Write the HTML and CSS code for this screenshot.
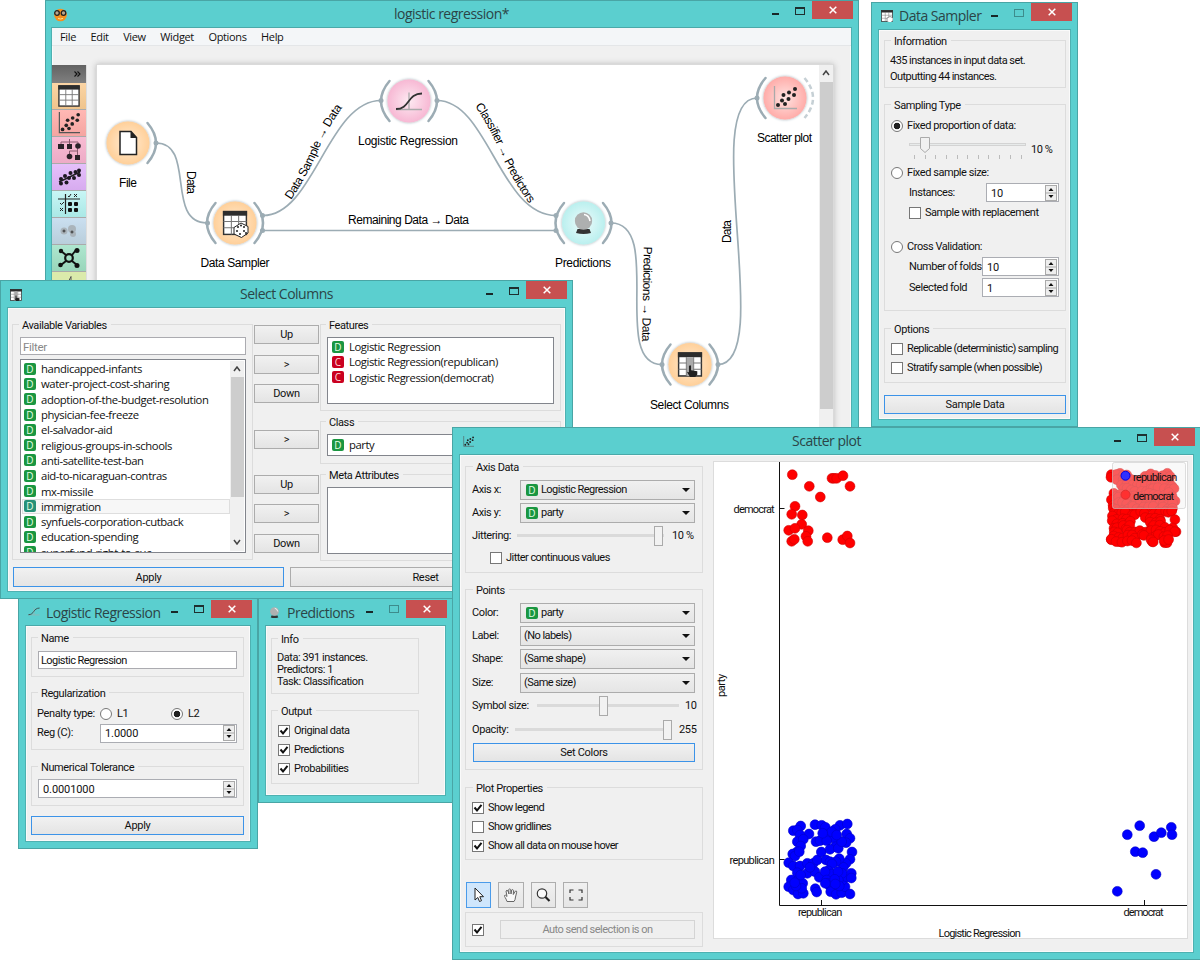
FILE: index.html
```html
<!DOCTYPE html>
<html lang="en">
<head>
<meta charset="utf-8">
<title>logistic regression</title>
<link rel="stylesheet" href="styles.css">
</head>
<body>
<svg class="defs" width="0" height="0" aria-hidden="true">
  <defs>
    <symbol id="i-table" viewBox="0 0 24 24"><rect x="1" y="1" width="22" height="22" fill="#fff" stroke="#333" stroke-width="1.5"/><path d="M1 10.5h22M1 16.5h22M8.5 5v18M15.500 5v18" stroke="#777" stroke-width="1"/><rect x="0.300" y="0.300" width="23.400" height="4.700" fill="#2d2d2d"/></symbol>
    <symbol id="i-scatter" viewBox="0 0 24 24"><path d="M1.500 0v22.500H24" fill="none" stroke="var(--axis,#555)" stroke-width="1.300"/><g fill="#222"><circle cx="5" cy="19" r="2"/><circle cx="9" cy="14.500" r="2"/><circle cx="12" cy="18" r="2"/><circle cx="10.500" cy="9" r="2"/><circle cx="15.500" cy="13" r="2"/><circle cx="16" cy="6.500" r="2"/><circle cx="21" cy="9" r="2"/><circle cx="22" cy="3" r="2"/></g></symbol>
    <symbol id="i-sigmoid" viewBox="0 0 28 20"><path d="M14 1v17M1 18h26" stroke="#aaa" stroke-width="1.300"/><path d="M1 17.500C15 17.500 12 2 27 2" fill="none" stroke="#333" stroke-width="1.800"/></symbol>
    <symbol id="i-ball" viewBox="0 0 18 22"><path d="M3 17h12l1.500 4q-7.500 2-15 0z" fill="#333"/><circle cx="9" cy="9" r="8.700" fill="#aeb0b0"/><path d="M9.500 2.500q5 .5 6 6.500" fill="none" stroke="#fff" stroke-width="1.600"/></symbol>
    <symbol id="i-dice" viewBox="0 0 24 24"><use href="#i-table"/><path d="M12 16l6-3 6 2.500v6L18 26l-6-3z" fill="#fff" stroke="#333"/></symbol>
    <symbol id="i-columns" viewBox="0 0 24 24"><use href="#i-table"/><rect x="9" y="5" width="6" height="18" fill="#aaa"/><path d="M11 13.500q1.500-1.500 2 0v4l6 1v3l-2 2.500h-5l-3-5 2 .5z" fill="#222"/></symbol>
  </defs>
</svg>
<div class="desktop">

<section class="window w-main">
  <header class="titlebar wide">
    <svg class="ticon" width="15" height="15" viewBox="0 0 15 15"><circle cx="7.500" cy="8" r="6.300" fill="#f49020"/><circle cx="4" cy="6" r="2.300" fill="#b9a58b" stroke="#222" stroke-width="1.300"/><circle cx="10.500" cy="6" r="2.300" fill="#b9a58b" stroke="#222" stroke-width="1.300"/><path d="M5 11.300q2.500 1.500 5 0" stroke="#ffe08a" fill="none"/></svg>
    <h1>logistic regression*</h1>
    <div class="ctl"><i class="min"></i><i class="max"></i><b class="close"><svg width="8" height="8" viewBox="0 0 8 8"><path d="M.7.7l6.600 6.600M7.300.7L.7 7.300"/></svg></b></div>
  </header>
  <div class="client">
    <nav class="menu"><span>File</span><span>Edit</span><span>View</span><span>Widget</span><span>Options</span><span>Help</span></nav>
    <div class="work">
      <aside class="dock">
        <div class="dhead"><svg width="7" height="6" viewBox="0 0 7 6"><path d="M.5.5L3 3 .5 5.500M3.500.5L6 3 3.500 5.500" fill="none" stroke="#111" stroke-width="1.100"/></svg></div>
        <div class="cat c1"><svg width="22" height="22"><use href="#i-table"/></svg></div>
        <div class="cat c2"><svg width="22" height="22"><use href="#i-scatter"/></svg></div>
        <div class="cat c3"><svg width="23" height="22" viewBox="0 0 23 22"><path d="M3 6V3h17v3M11.500 0v6M19.500 8v4h-8v4M19.500 12v4" fill="none" stroke="#8a5b6e"/><g fill="#2a2228"><rect x="0" y="5" width="6" height="5"/><rect x="9" y="5" width="5" height="5"/><circle cx="20" cy="7" r="2.800"/><circle cx="11.500" cy="17.500" r="2.800"/><rect x="17" y="16" width="5" height="5"/></g></svg></div>
        <div class="cat c4"><svg width="23" height="18" viewBox="0 0 23 18"><path d="M1 14L22 4" stroke="#222" stroke-width="1.500"/><g fill="#1d1822"><circle cx="3" cy="11" r="2"/><circle cx="3" cy="15.500" r="2"/><circle cx="7" cy="8" r="2"/><circle cx="8.500" cy="14.500" r="2"/><circle cx="11" cy="10" r="2"/><circle cx="12.500" cy="5" r="2"/><circle cx="16" cy="10" r="2"/><circle cx="17.500" cy="4" r="2"/><circle cx="21" cy="2.500" r="2"/><circle cx="21" cy="7" r="2"/></g></svg></div>
        <div class="cat c5"><svg width="22" height="20" viewBox="0 0 22 20"><path d="M0 5h22M7.500 0v20" stroke="#222" stroke-width="1.200"/><path d="M10 2l1 1 2-3M16 0l3 3M19 0l-3 3M2 9l1.500 1.500L6 8M2 14l3 3M5 14l-3 3" fill="none" stroke="#222"/><g fill="#111"><rect x="10" y="8" width="4" height="4" rx="1"/><rect x="16" y="8" width="4" height="4" rx="1"/><rect x="10" y="14" width="4" height="4" rx="1"/><rect x="16" y="14" width="4" height="4" rx="1"/></g></svg></div>
        <div class="cat c6"><svg width="18" height="14" viewBox="0 0 18 14"><g fill="#aab4bb"><circle cx="4" cy="7" r="3.500"/><circle cx="12" cy="5" r="4"/><circle cx="13" cy="10" r="3"/></g><path d="M4 5.500v3M2.500 7h3M12 6.500v3M10.500 8h3" stroke="#333"/></svg></div>
        <div class="cat c7"><svg width="22" height="20" viewBox="0 0 22 20"><path d="M3 3l5 4M18 2l-4 5M3 17l5-4M19 17l-5-4" stroke="#111" stroke-width="2"/><circle cx="11" cy="10" r="3.800" fill="none" stroke="#111" stroke-width="2.200"/><g fill="#111"><circle cx="3" cy="3" r="2.200"/><circle cx="19" cy="2.500" r="2.500"/><circle cx="2.500" cy="17" r="2.300"/><circle cx="19" cy="17.500" r="2.500"/></g></svg></div>
        <div class="cat c8"><svg width="12" height="10" viewBox="0 0 12 10"><path d="M4 8.500h2l2-4V10" fill="none" stroke="#555"/></svg></div>
      </aside>
      <div class="canvas">
        <svg class="flow" width="722" height="400" viewBox="97 65 722 400">
          <defs>
            <radialGradient id="go"><stop offset="0" stop-color="#ffecd4"/><stop offset="1" stop-color="#ffcf98"/></radialGradient>
            <radialGradient id="gp"><stop offset="0" stop-color="#fdeaf2"/><stop offset="1" stop-color="#f7b7d3"/></radialGradient>
            <radialGradient id="gc"><stop offset="0" stop-color="#eefcfc"/><stop offset="1" stop-color="#b9efee"/></radialGradient>
            <radialGradient id="gr"><stop offset="0" stop-color="#ffe3e1"/><stop offset="1" stop-color="#ffaba8"/></radialGradient>
            <path id="arc" d="M19.500-20Q36.500 0 19.500 20"/>
            <path id="p1" d="M291 200Q306 178 318 151Q327 128 345 104"/>
            <path id="p2" d="M475 106Q490 128 500 152Q512 180 531 206"/>
          </defs>
          <g class="link">
            <path d="M156 143C196 143 165 223 207 223"/>
            <path d="M263 215.500C314 215.500 328 100.500 381 100.500"/>
            <path d="M263 230.500H556"/>
            <path d="M437 100.500C488 100.500 500 215.500 556 215.500"/>
            <path d="M611 223C664 223 610 364.500 662 364.500"/>
            <path d="M718 364.500C776 364.500 698 98 757 98"/>
          </g>
          <g class="ports"><circle cx="156" cy="143" r="2.500"/><circle cx="207.500" cy="223" r="2.500"/><circle cx="262.500" cy="215.500" r="2.500"/><circle cx="262.500" cy="230.500" r="2.500"/><circle cx="381" cy="100.500" r="2.500"/><circle cx="437" cy="100.500" r="2.500"/><circle cx="556" cy="215.500" r="2.500"/><circle cx="556" cy="230.500" r="2.500"/><circle cx="611" cy="223" r="2.500"/><circle cx="662" cy="364.500" r="2.500"/><circle cx="718" cy="364.500" r="2.500"/><circle cx="757" cy="98" r="2.500"/></g>
          <g transform="translate(128 143)"><circle class="disc" r="22" fill="url(#go)"/><use class="arc" href="#arc"/><path d="M-8-11.500H3L8.500-5.500V11.500H-8z" fill="#fff" stroke="#222" stroke-width="1.500"/><path d="M2.500-12l6.500 7h-6.500z" fill="#222"/></g>
          <g transform="translate(235 223)"><circle class="disc" r="22" fill="url(#go)"/><use class="arc" href="#arc"/><use class="arc" href="#arc" transform="scale(-1 1)"/><use href="#i-table" x="-12.500" y="-12.500" width="25" height="25"/><path d="M-1 4.500L6 0l7 3.500V10L6.500 14.500-1 11z" fill="#fff" stroke="#222"/><g fill="#222"><circle cx="3" cy="4" r="1"/><circle cx="6" cy="2.500" r="1"/><circle cx="9" cy="4" r="1"/><circle cx="2" cy="8" r="1"/><circle cx="5" cy="11" r="1"/><circle cx="9" cy="8" r="1"/><circle cx="11" cy="10" r="1"/></g></g>
          <g transform="translate(409 101)"><circle class="disc" r="22" fill="url(#gp)"/><use class="arc" href="#arc"/><use class="arc" href="#arc" transform="scale(-1 1)"/><use href="#i-sigmoid" x="-14" y="-9.500" width="28" height="20"/></g>
          <g transform="translate(583.500 223)"><circle class="disc" r="22" fill="url(#gc)"/><use class="arc" href="#arc"/><use class="arc" href="#arc" transform="scale(-1 1)"/><use href="#i-ball" x="-9" y="-11" width="18" height="22"/></g>
          <g transform="translate(785 98)"><circle class="disc" r="22" fill="url(#gr)"/><use class="arc dash" href="#arc"/><use class="arc" href="#arc" transform="scale(-1 1)"/><use class="pale" href="#i-scatter" x="-12.500" y="-12" width="25" height="24"/></g>
          <g transform="translate(690 364.500)"><circle class="disc" r="22" fill="url(#go)"/><use class="arc" href="#arc"/><use class="arc" href="#arc" transform="scale(-1 1)"/><use href="#i-columns" x="-12.500" y="-12.500" width="25" height="25"/></g>
          <g class="nlabel">
            <text x="128" y="187" textLength="18">File</text><text x="235" y="267" textLength="69">Data Sampler</text><text x="408" y="145" textLength="100">Logistic Regression</text><text x="583" y="267" textLength="56">Predictions</text><text x="784.500" y="142" textLength="55">Scatter plot</text><text x="689.500" y="408.500" textLength="79">Select Columns</text>
            <text x="408.500" y="224" textLength="121">Remaining Data → Data</text>
            <text transform="translate(187 182.500) rotate(90)" textLength="23">Data</text>
            <text transform="translate(643 294) rotate(91)" textLength="95">Predictions → Data</text>
            <text transform="translate(731 231.500) rotate(-90)" textLength="23">Data</text>
          </g>
          <g class="clabel"><text textLength="106"><textPath href="#p1">Data Sample → Data</textPath></text><text textLength="112"><textPath href="#p2">Classifier → Predictors</textPath></text></g>
        </svg>
        <div class="vscroll"><svg width="8" height="6" viewBox="0 0 8 6"><path d="M1 5l3-4 3 4" /></svg><i></i></div>
      </div>
    </div>
  </div>
</section>

<section class="window w-sampler">
  <header class="titlebar">
    <svg class="ticon" width="12" height="12"><use href="#i-dice"/></svg>
    <h1>Data Sampler</h1>
    <div class="ctl"><i class="min"></i><i class="max off"></i><b class="close"><svg width="8" height="8" viewBox="0 0 8 8"><path d="M.7.7l6.600 6.600M7.300.7L.7 7.300"/></svg></b></div>
  </header>
  <div class="client">
    <div class="group g-info"><span class="cap">Information</span><p>435 instances in input data set.</p><p>Outputting 44 instances.</p></div>
    <div class="group g-type"><span class="cap">Sampling Type</span>
      <label class="row"><i class="radio on"></i>Fixed proportion of data:</label>
      <div class="prop"><div class="ticked"><svg width="118" height="23" viewBox="0 0 118 23"><rect x=".5" y="6.500" width="116" height="2" fill="#e7eaea" stroke="#d3d3d3"/><path d="M5.500 18v4M16.500 18v4M26.500 18v4M37.500 18v4M48.500 18v4M58.500 18v4M69.500 18v4M79.500 18v4M90.500 18v4M101.500 18v4M112.500 18v4" stroke="#bbb"/><path d="M11.500.5h9v11l-4.500 4-4.500-4z" fill="#f1f1f1" stroke="#aaa"/></svg></div><span>10 %</span></div>
      <label class="row r2"><i class="radio"></i>Fixed sample size:</label>
      <div class="row ind r3"><span>Instances:</span><div class="spin s72">10<i></i></div></div>
      <label class="row ind r4"><i class="check"></i>Sample with replacement</label>
      <label class="row r5"><i class="radio"></i>Cross Validation:</label>
      <div class="row ind r6"><span>Number of folds</span><div class="spin s77">10<i></i></div></div>
      <div class="row ind r7"><span>Selected fold</span><div class="spin s77">1<i></i></div></div>
    </div>
    <div class="group g-opt"><span class="cap">Options</span>
      <label class="row"><i class="check"></i>Replicable (deterministic) sampling</label>
      <label class="row"><i class="check"></i>Stratify sample (when possible)</label>
    </div>
    <div class="btn def">Sample Data</div>
  </div>
</section>

<section class="window w-log">
  <header class="titlebar">
    <svg class="ticon" width="12" height="9"><use href="#i-sigmoid"/></svg>
    <h1>Logistic Regression</h1>
    <div class="ctl"><i class="min"></i><i class="max"></i><b class="close"><svg width="8" height="8" viewBox="0 0 8 8"><path d="M.7.7l6.600 6.600M7.300.7L.7 7.300"/></svg></b></div>
  </header>
  <div class="client">
    <div class="group g-name"><span class="cap">Name</span><div class="input">Logistic Regression</div></div>
    <div class="group g-reg"><span class="cap">Regularization</span>
      <div class="row pen"><span>Penalty type:</span><i class="radio"></i><span class="l1">L1</span><i class="radio on"></i><span>L2</span></div>
      <div class="row regc"><span>Reg (C):</span><div class="spin">1.0000<i></i></div></div>
    </div>
    <div class="group g-tol"><span class="cap">Numerical Tolerance</span><div class="spin">0.0001000<i></i></div></div>
    <div class="btn def">Apply</div>
  </div>
</section>

<section class="window w-pred">
  <header class="titlebar">
    <svg class="ticon" width="9" height="11"><use href="#i-ball"/></svg>
    <h1>Predictions</h1>
    <div class="ctl"><i class="min"></i><i class="max off"></i><b class="close"><svg width="8" height="8" viewBox="0 0 8 8"><path d="M.7.7l6.600 6.600M7.300.7L.7 7.300"/></svg></b></div>
  </header>
  <div class="client">
    <div class="group g-pinfo"><span class="cap">Info</span><p>Data: 391 instances.</p><p>Predictors: 1</p><p>Task: Classification</p></div>
    <div class="group g-out"><span class="cap">Output</span>
      <label class="row"><i class="check on"></i>Original data</label><label class="row"><i class="check on"></i>Predictions</label><label class="row"><i class="check on"></i>Probabilities</label>
    </div>
  </div>
</section>

<section class="window w-select">
  <header class="titlebar wide">
    <svg class="ticon" width="12" height="12"><use href="#i-columns"/></svg>
    <h1>Select Columns</h1>
    <div class="ctl"><i class="min"></i><i class="max"></i><b class="close"><svg width="8" height="8" viewBox="0 0 8 8"><path d="M.7.7l6.600 6.600M7.300.7L.7 7.300"/></svg></b></div>
  </header>
  <div class="client">
    <div class="cols">
      <div class="group g-avail"><span class="cap">Available Variables</span>
        <div class="input filter">Filter</div>
        <div class="list vars"><ul><li><b class="v">D</b>handicapped-infants</li><li><b class="v">D</b>water-project-cost-sharing</li><li><b class="v">D</b>adoption-of-the-budget-resolution</li><li><b class="v">D</b>physician-fee-freeze</li><li><b class="v">D</b>el-salvador-aid</li><li><b class="v">D</b>religious-groups-in-schools</li><li><b class="v">D</b>anti-satellite-test-ban</li><li><b class="v">D</b>aid-to-nicaraguan-contras</li><li><b class="v">D</b>mx-missile</li><li class="hot"><b class="v">D</b>immigration</li><li><b class="v">D</b>synfuels-corporation-cutback</li><li><b class="v">D</b>education-spending</li><li><b class="v">D</b>superfund-right-to-sue</li></ul>
          <div class="vscroll"><svg width="8" height="6" viewBox="0 0 8 6"><path d="M1 5l3-4 3 4"/></svg><i></i><svg class="dn" width="8" height="6" viewBox="0 0 8 6"><path d="M1 1l3 4 3-4"/></svg></div></div>
      </div>
      <div class="moves"><div class="btn">Up</div><div class="btn">&gt;</div><div class="btn">Down</div><div class="btn gapa">&gt;</div><div class="btn gapb">Up</div><div class="btn">&gt;</div><div class="btn">Down</div></div>
      <div class="chosen">
        <div class="group g-feat"><span class="cap">Features</span><div class="list"><ul><li><b class="v">D</b>Logistic Regression</li><li><b class="v c">C</b>Logistic Regression(republican)</li><li><b class="v c">C</b>Logistic Regression(democrat)</li></ul></div></div>
        <div class="group g-class"><span class="cap">Class</span><div class="list"><ul><li><b class="v">D</b>party</li></ul></div></div>
        <div class="group g-meta"><span class="cap">Meta Attributes</span><div class="list"></div></div>
      </div>
    </div>
    <div class="foot"><div class="btn def">Apply</div><div class="btn">Reset</div></div>
  </div>
</section>

<section class="window w-plot">
  <header class="titlebar wide">
    <svg class="ticon" width="11" height="11"><use href="#i-scatter"/></svg>
    <h1>Scatter plot</h1>
    <div class="ctl"><i class="min"></i><i class="max"></i><b class="close"><svg width="8" height="8" viewBox="0 0 8 8"><path d="M.7.7l6.600 6.600M7.300.7L.7 7.300"/></svg></b></div>
  </header>
  <div class="client">
    <div class="side">
      <div class="group g-axis"><span class="cap">Axis Data</span>
        <div class="field"><span>Axis x:</span><div class="combo"><b class="v">D</b>Logistic Regression</div></div>
        <div class="field"><span>Axis y:</span><div class="combo"><b class="v">D</b>party</div></div>
        <div class="field slide"><span>Jittering:</span><div class="slider jit"><i></i></div><em>10 %</em></div>
        <label class="row jc"><i class="check"></i>Jitter continuous values</label>
      </div>
      <div class="group g-points"><span class="cap">Points</span>
        <div class="field"><span>Color:</span><div class="combo"><b class="v">D</b>party</div></div>
        <div class="field"><span>Label:</span><div class="combo">(No labels)</div></div>
        <div class="field"><span>Shape:</span><div class="combo">(Same shape)</div></div>
        <div class="field"><span>Size:</span><div class="combo">(Same size)</div></div>
        <div class="field slide"><span>Symbol size:</span><div class="slider sym"><i></i></div><em>10</em></div>
        <div class="field slide"><span>Opacity:</span><div class="slider opa"><i></i></div><em>255</em></div>
        <div class="btn def">Set Colors</div>
      </div>
      <div class="group g-props"><span class="cap">Plot Properties</span>
        <label class="row"><i class="check on"></i>Show legend</label><label class="row"><i class="check"></i>Show gridlines</label><label class="row"><i class="check on"></i>Show all data on mouse hover</label>
      </div>
      <div class="tools">
        <div class="tool sel"><svg width="12" height="16" viewBox="0 0 12 16"><path d="M2 1v12l2.800-2.500L6.500 14.500l2-.8-1.700-4H10.500z" fill="#fff" stroke="#222"/></svg></div>
        <div class="tool"><svg width="16" height="15" viewBox="0 0 16 15"><path d="M4 13.500C3 10 1 8.500 1.500 7.500q1-1 2.500 1L3 3q1-1.500 2 0l1 3-.3-4.500q1.200-1.200 2 0L8 6l.7-4q1.300-1 1.800.3L10.300 6.500 12.500 3q1.500-.3 1.200 1.200L12.500 9q-.2 3-1.500 4.500z" fill="#f8f8f8" stroke="#666"/></svg></div>
        <div class="tool"><svg width="16" height="16" viewBox="0 0 16 16"><circle cx="7" cy="6.500" r="4.700" fill="#fafafa" stroke="#333" stroke-width="1.200"/><path d="M10.500 10l4 4" stroke="#222" stroke-width="2.200"/></svg></div>
        <div class="tool"><svg width="14" height="12" viewBox="0 0 14 12"><path d="M1 4V1h3.500M9.500 1H13v3M13 8v3H9.500M4.500 11H1V8" fill="none" stroke="#333" stroke-width="1.200"/></svg></div>
      </div>
      <div class="group g-send"><i class="check on"></i><div class="btn dis">Auto send selection is on</div></div>
    </div>
    <div class="plot">
      <svg width="473" height="476" viewBox="714 462 473 476">
        <g id="dots"></g>
        <path d="M779.500 462v443.500H1187M779.500 508.500h5M779.500 859.500h5M821.500 905v-5M1144.500 905v-5" fill="none" stroke="#111"/>
        <rect x="1112.500" y="462.500" width="73" height="46" rx="2" fill="#f0f0f0" fill-opacity=".38" stroke="#c8c8c8" stroke-opacity=".6"/>
        <circle cx="1125.500" cy="475.700" r="4.500" fill="#2f2fff" stroke="#0000e0"/><circle cx="1125.500" cy="494.700" r="4.500" fill="#ff3030" stroke="#e03030"/>
        <g class="ptext"><text x="1133" y="480.500" textLength="44">republican</text><text x="1133" y="499.500" textLength="41">democrat</text><text x="733.500" y="512.500" textLength="41">democrat</text><text x="729.500" y="864" textLength="45">republican</text><text x="798" y="916" textLength="44">republican</text><text x="1123.500" y="916" textLength="40">democrat</text><text x="938.500" y="937" textLength="82">Logistic Regression</text><text transform="translate(724.500 697) rotate(-90)" textLength="23">party</text></g>
      </svg>
    </div>
  </div>
</section>
</div>
<script src="plot.js"></script>
</body>
</html>
```

FILE: styles.css
```css
*{box-sizing:border-box}
body{margin:0;background:#fff;font:11px Roboto,"Noto Sans",sans-serif;letter-spacing:-.55px;color:#111;line-height:14px}
.defs{display:block;height:0}
.desktop{position:relative;width:1200px;height:960px;overflow:hidden}
p,h1,ul{margin:0;padding:0;list-style:none}
.window{position:absolute;display:flex;flex-direction:column;background:#5bcfcf;border:1px solid #49a5a5;padding:0 6px 6px}
.w-main{left:45px;top:0;width:814px;height:500px}
.window.w-main{padding-left:5px}
.w-sampler{left:871px;top:2px;width:207px;height:425px}
.w-log{left:18px;top:598px;width:240px;height:251px}
.w-pred{left:258px;top:598px;width:195px;height:205px}
.w-select{left:0;top:280px;width:573px;height:319px}
.w-plot{left:452px;top:427px;width:749px;height:533px}
.titlebar{height:26px;flex:none;display:flex;align-items:flex-start}
.titlebar.wide{display:grid;grid-template-columns:1fr auto 1fr}
.titlebar h1{font:14px/26px "Open Sans",sans-serif;letter-spacing:-.5px;color:#2b4547;white-space:nowrap}
.ticon{margin:7px 6px 0 3px}
.w-main .ticon{margin:6px 0 0 2px}
.w-plot .ticon{margin:8px 0 0 4px}
.w-select .ticon{margin-top:8px}
.w-log .ticon{margin:8px 6px 0 3px}
.w-pred .ticon{margin:8px 8px 0 5px}
.w-log h1,.w-pred h1{padding-top:1px}
.ctl{display:flex;align-items:flex-start;justify-content:flex-end;margin-left:auto;margin-right:-1px}
.min{width:7px;height:2px;background:#182828;margin:12px 16px 0 0}
.max{width:10px;height:8px;border:1px solid #1e3030;border-top-width:2px;margin:6px 7px 0 0}
.max.off{border-color:#3d8c8c;border-top-width:1px}
.close{width:41px;height:18px;background:#c75050;display:flex;align-items:center;justify-content:center}
.close path{stroke:#fff;stroke-width:1.500;fill:none}
.w-log .close,.w-pred .close{margin-top:1px}
.client{flex:1;min-height:0;background:#f0f0f0;border:1px solid #4eb1b1;border-top-color:#4aa9a9;box-shadow:inset 0 0 0 1px #fafafa}
.group{border:1px solid #dcdcdc;display:flex;flex-direction:column}
.cap{align-self:flex-start;height:14px;margin:-7px 0 0 6px;padding:1px 4px 0 3px;background:#f0f0f0;flex:none;white-space:nowrap;letter-spacing:-.4px}
.row{display:flex;align-items:center;height:19px;white-space:nowrap;line-height:16px}
.check{flex:none;width:12px;height:12px;border:1px solid #777;background:#fff;margin-right:4px}
.check.on{background:#fff url("data:image/svg+xml,%3Csvg xmlns='http://www.w3.org/2000/svg' viewBox='0 0 10 10'%3E%3Cpath d='M1.500 4.500L4 7.500 8.500 1.800' fill='none' stroke='%23111' stroke-width='2'/%3E%3C/svg%3E") center/10px no-repeat}
.radio{flex:none;width:12px;height:12px;border:1px solid #777;border-radius:50%;background:#fff;margin-right:4px}
.radio.on{background:radial-gradient(circle,#222 0 3px,#fff 3.600px)}
.btn{height:19px;display:flex;align-items:center;justify-content:center;border:1px solid #acacac;background:linear-gradient(#f1f1f1,#e4e4e4);flex:none;padding-top:1px;letter-spacing:-.3px}
.btn.def{border-color:#3c93e8}
.btn.dis{border-color:#d4d4d4;background:#efefef;color:#888}
.input{height:18px;border:1px solid #ababb0;background:#fff;padding:2px 2px 0;display:flex;align-items:center}
.spin{height:19px;border:1px solid #abadb3;background:#fff;display:flex;align-items:center;padding:1px 1px 0 4px;flex:none;letter-spacing:-.1px;line-height:17px}
.spin i{margin:-1px 0 0 auto;width:12px;height:16px;border:1px solid #aaa;background:url("data:image/svg+xml,%3Csvg xmlns='http://www.w3.org/2000/svg' viewBox='0 0 10 14'%3E%3Cpath d='M0 7h10' stroke='%23aaa'/%3E%3Cpath d='M2.500 5L5 2l2.500 3zM2.500 9L5 12l2.500-3z' fill='%23111'/%3E%3C/svg%3E") center/10px 14px no-repeat #eee}
.v{flex:none;width:12px;height:12px;border-radius:2px;background:#1a9641;color:#e4ffe4;font:10px/12px "Open Sans",sans-serif;letter-spacing:0;text-align:center;margin-right:5px}
.v.c{background:#ca0020;color:#ffdada}

.menu{height:18px;background:#f4f6f8;border-bottom:1px solid #e4e6e8;display:flex;gap:14.500px;padding-left:8px;font:11px/18px "Open Sans",sans-serif;letter-spacing:-.35px}
.work{display:flex;padding-top:19px}
.dock{width:35px;height:380px;flex:none;border-right:1px solid #ddd}
.dhead{height:18px;background:linear-gradient(#626262,#808080);display:flex;align-items:center;justify-content:flex-end;padding-right:5px}
.cat{height:27px;display:flex;align-items:center;justify-content:center;border-bottom:1px solid #aaa}
.c1{background:linear-gradient(#fbd5a5,#efc48c)}
.c2{background:linear-gradient(#ffb8b4,#f5a5a1)}
.c3{background:linear-gradient(#f8bcd3,#edabc6)}
.c4{background:linear-gradient(#e5c0fb,#d7abef)}
.c5{background:linear-gradient(#c8f6f5,#aae8e6)}
.c6{background:linear-gradient(#cadff0,#b9cedb)}
.c7{background:linear-gradient(#aee6cf,#99d6ba)}
.c8{background:#dbeaab;align-items:flex-start}
.canvas{margin:-1px 0 0 9px;width:738px;height:400px;display:flex;background:#fff;border:1px solid #dadada;box-shadow:0 0 6px #bbb}
.flow{display:block;flex:none}
.link path{fill:none;stroke:#9cacb4;stroke-width:1.700}
.ports{fill:#9cacb4}
.arc{fill:none;stroke:#9cacb4;stroke-width:2.500;stroke-linecap:round}
.dash{stroke:#c6d0d5;stroke-dasharray:5 3;stroke-linecap:butt}
.disc{stroke:#e3e3e3;stroke-width:.8;filter:drop-shadow(0 0 1px #c9d6dd)}
.pale{--axis:#aaa}
.nlabel text{font:12px "Liberation Sans",sans-serif;text-anchor:middle;letter-spacing:0}
.clabel text{font:12px "Liberation Sans",sans-serif;letter-spacing:0}
.vscroll{width:14px;background:#f0f0f0;display:flex;flex-direction:column;align-items:center;padding-top:5px}
.vscroll path{fill:none;stroke:#444;stroke-width:1.500}
.vscroll i{width:13px;height:327px;background:#cdcdcd;margin-top:6px}

.w-sampler .client{padding:10px 4px 0 5px}
.g-info{height:48px;padding-left:5px}
.g-info p{height:16px}
.g-info .cap{margin-left:1px;margin-bottom:6px}
.g-type{height:207px;margin-top:16px;padding:0 6px;letter-spacing:-.45px}
.g-type .cap,.g-opt .cap{margin-left:0}
.g-type>.row:nth-child(2){margin-top:4px}
.prop{display:flex;padding:2px 0 0 18px;height:25px;gap:4px}
.prop span{padding-top:6px}
.r2{margin-top:3px}
.row.r3{height:21px;justify-content:space-between}
.row.r4{height:20px}
.r5{margin-top:14px}
.row.r6,.row.r7{height:21px;justify-content:space-between}
.row.ind{padding-left:18px}
.s72{width:73px}.s77{width:77px}
.g-opt{height:55px;margin-top:17px;padding:0 6px}
.g-opt .row{letter-spacing:-.62px}
.g-opt .cap{margin-bottom:3px}
.w-sampler .btn{margin-top:12px}

.w-log .client{padding:11px 6px 0 5px}
.g-name{height:40px;padding:0 6px}
.g-name .cap,.g-reg .cap,.g-tol .cap{margin-left:0;margin-bottom:6px}
.g-reg{height:58px;margin-top:15px;padding:0 6px 0 5px}
.g-reg .cap{margin-left:1px;margin-bottom:4px}
.g-reg .row{letter-spacing:-.35px}
.pen .radio{margin-right:5px}
.pen span:first-child{width:63px}
.l1{width:54px}
.row.regc{height:20px}
.regc span{width:63px}
.regc .spin{flex:1}
.g-tol{height:40px;margin-top:16px;padding:0 6px}
.g-tol .cap{margin-bottom:5px}
.w-log .btn{margin:10px 0 0}

.w-pred .client{padding:12px 26px 0 5px}
.g-pinfo{height:56px;padding-left:5px}
.g-pinfo .cap,.g-out .cap{margin-left:1px}
.g-pinfo .cap{margin-bottom:6px}
.g-pinfo p{line-height:12px;letter-spacing:-.45px}
.g-out{height:74px;margin-top:16px;padding-left:6px}
.g-out .row{letter-spacing:-.5px}
.g-out .cap{margin-left:0;margin-bottom:3px}

.w-select .client{padding:16px 3px 0 4px}
.cols{display:flex;height:236px}
.g-avail{width:241px;padding:0 6px 0 7px}
.g-avail .cap,.chosen .cap{margin-left:-1px;margin-bottom:5px}
.input.filter{color:#888;font-size:11.500px;padding-top:1px;letter-spacing:-.3px}
.list{border:1px solid #82858c;background:#fff;font:11.300px "Open Sans",sans-serif;letter-spacing:-.4px;overflow:hidden;padding:1px}
.list li{height:15.300px;display:flex;align-items:center;padding-left:2px;white-space:nowrap;border:1px solid transparent}
.chosen .list{letter-spacing:-.45px}
.list .hot{background:#f7f7f7;border-color:#dedede}
.hot .v{background:#259078}
.vars{margin-top:4px;height:194px;display:flex}
.vars ul{flex:1}
.vars.list li{padding-left:1px}
.vscroll .dn{margin:auto 0 6px}
.vars .vscroll i{height:120px;margin-top:5px}
.moves{width:65px;margin:1px 1px 0;display:flex;flex-direction:column;gap:10.700px}
.moves .gapa{margin-top:16px}.moves .gapb{margin-top:15px}
.chosen{width:241px}
.chosen .group{padding:0 6px}
.g-feat{height:87px}
.g-feat .list{height:67px}
.g-class{height:43px;margin-top:10px}
.g-class .list{height:22px;padding-top:2px}
.g-meta{height:87px;margin-top:10px}
.g-meta .list{height:67px}
.foot{display:flex;gap:6px;margin-top:7px;padding-left:1px}
.foot .btn{width:271px;height:20px}

.w-plot .client{padding:6px 4px 0;display:flex}
.side{width:238px;flex:none;margin:5px 0 0 1px}
.side .group{padding:0 6px}
.side .cap{margin:-7px 0 4px 1px}
.g-axis{height:107px}
.g-points{height:181px;margin-top:16px}
.field{display:flex;align-items:center;height:23.400px;white-space:nowrap;line-height:16px}
.field span{width:48px;flex:none;letter-spacing:-.4px}
.combo{flex:none;width:175px;height:20px;border:1px solid #acacac;background:linear-gradient(#f0f0f0,#e5e5e5);display:flex;align-items:center;padding:0 4px 0 3px}
.combo::after{content:"";margin-left:auto;border:4px solid transparent;border-top-color:#111;border-bottom:0}
.combo .v{margin:0 3px 0 2px}
.field.slide span{width:auto}
.slide em{font-style:normal;margin-left:auto;letter-spacing:-.35px}
.slider{height:20px;background:linear-gradient(#dadada,#dadada) 0 8px/100% 3px no-repeat}
.slider i{display:block;width:9px;height:20px;border:1px solid #aaa;background:#f2f2f2}
.jit{width:147px;margin-left:auto}.jit i{margin-left:137px}
.slide .jit+em{margin-left:8px;width:24px}
.slide .opa+em{margin-left:7px;width:17px}
.sym{width:142px;margin-left:auto}.sym i{margin-left:62px}
.slide .sym+em{margin-left:6px;width:11px}
.opa{width:157px;margin-left:auto}.opa i{margin-left:148px}
.jc{margin-left:18px}
.g-points .btn{margin:2px 1px 0}
.g-props{height:73px;margin-top:17px}
.side .g-props .cap{margin-bottom:3px}
.g-props .row{letter-spacing:-.6px}
.tools{display:flex;gap:7px;margin:22px 0 4px 1px}
.tool{width:25.300px;height:26px;border:1px solid #adadad;background:linear-gradient(#f0f0f0,#e5e5e5);display:flex;align-items:center;justify-content:center}
.tool.sel{background:#cfe6fc;border-color:#4a9bea}
.side .g-send{height:35px;flex-direction:row;align-items:center;padding-right:7px}
.g-send .btn{width:195px;margin-left:auto;letter-spacing:-.5px}
.plot{width:475px;height:478px;margin-left:10px;background:#fff;border:1px solid #dcdcdc}
.plot svg{display:block;overflow:visible}
.ptext text{font:11px Roboto,"Noto Sans",sans-serif;letter-spacing:-.2px;fill:#111}
```

FILE: plot.js
```js
// Jittered points in thirds of a pixel, relative to each cluster's origin.
const dots = document.getElementById('dots');
function dot(x, y, fill, edge) {
  const c = document.createElementNS('http://www.w3.org/2000/svg', 'circle');
  c.setAttribute('cx', x.toFixed(1));
  c.setAttribute('cy', y.toFixed(1));
  c.setAttribute('r', 4.9);
  c.setAttribute('fill', fill);
  c.setAttribute('stroke', edge);
  c.setAttribute('stroke-width', 0.6);
  dots.appendChild(c);
}
const blue = [[272,138],[250,152],[262,150],[315,134],[335,136],[346,142],[390,136],[412,132],[376,148],[410,162],[420,175],[297,162],[270,165],[262,185],[280,178],[272,198],[262,215],[248,222],[255,228],[236,248],[250,258],[270,258],[262,278],[244,300],[236,320],[265,300],[278,310],[250,330],[264,342],[280,340],[275,325],[292,280],[292,250],[310,250],[322,240],[315,275],[328,292],[316,326],[320,336],[334,216],[318,185],[330,182],[350,165],[372,175],[350,182],[365,155],[376,200],[360,208],[385,205],[408,188],[395,185],[426,216],[420,238],[408,250],[400,262],[388,236],[378,245],[348,240],[360,245],[366,252],[355,272],[365,282],[345,275],[350,300],[360,318],[352,310],[375,325],[362,335],[378,343],[395,338],[405,320],[420,342],[398,300],[410,290],[424,280],[424,294],[396,280],[385,300],[388,318],[346,310],[258,318],[300,262],[268,215],[338,160],[380,165],[384,275],[374,298],[376,312],[254,308],[272,285],
[1289,137],[1252,164],[1332,170],[1354,158],[1384,142],[1386,164],[1276,215],[1298,218],[1338,283],[1222,334]];
const red = [[247,149],[298,184],[331,216],[366,160],[372,160],[380,160],[399,152],[420,184],[255,244],[245,268],[277,270],[275,298],[236,316],[255,310],[295,317],[288,334],[293,349],[245,349],[253,343],[352,338],[398,344],[412,333],[420,354],
[1204,149],[1230,145],[1250,150],[1310,155],[1372,145],[1227,350],[1204,344],[1327,350],[1364,353],[1371,353],[1398,320],[1273,344],[1212,290]];
const gaps = [[1287,290,22],[1378,292,17],[1320,264,9],[1280,140,20],[1345,138,14],[1404,150,22],[1203,182,18],[1302,350,17],[1397,350,22],[1234,330,9],[1350,350,8]];
let seed = 7;
const rnd = () => (seed = (seed * 16807) % 2147483647) / 2147483647;
for (let y = 152; y < 350; y += 14) {
  for (let x = 1208; x < 1402; x += 14) {
    const px = x + rnd() * 10 - 5, py = y + rnd() * 12 - 6;
    if (gaps.every(([gx, gy, r]) => Math.hypot(px - gx, py - gy) > r)) red.push([px, py]);
  }
}
blue.forEach(([x, y]) => dot(710 + x / 3, 780 + y / 3, '#0000ff', '#0000c8'));
red.forEach(([x, y]) => dot(710 + x / 3, 425 + y / 3, '#ff0000', '#d00000'));
```
